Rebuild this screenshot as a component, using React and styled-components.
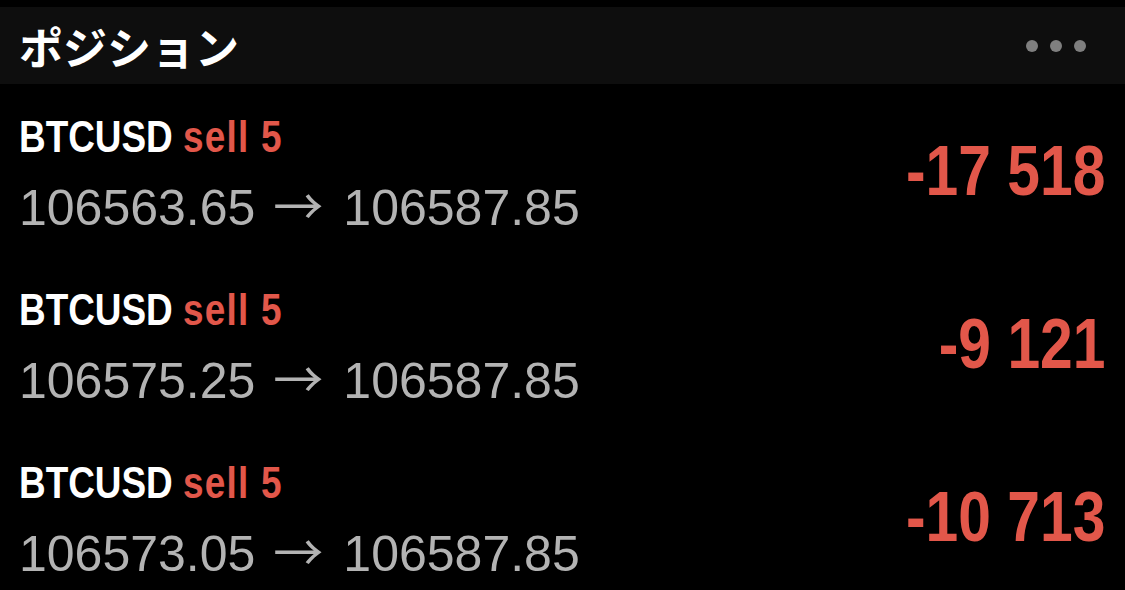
import React from "react";
import styled, { createGlobalStyle } from "styled-components";

const GlobalStyle = createGlobalStyle`
  body {
    margin: 0;
    background: #000;
  }
`

const Page = styled.div`
  width: 1125px;
  height: 590px;
  overflow: hidden;
  background: #000;
  padding-top: 7px;
  box-sizing: border-box;
`

const Header = styled.div`
  height: 77px;
  display: flex;
  align-items: center;
  justify-content: space-between;
  padding: 0 39px 0 19px;
  background: #0e0e0e;
`

const Title = styled.h2`
  margin: 0;
  color: #fff;
  font-family: "Noto Sans CJK JP", sans-serif;
  font-weight: 700;
  font-size: 44px;
  line-height: 1;
`

const Dots = styled.div`
  display: flex;
  gap: 12px;

  span {
    width: 12px;
    height: 12px;
    border-radius: 50%;
    background: #7f7f7f;
  }
`

const Row = styled.div`
  height: 173px;
  display: flex;
  align-items: center;
  justify-content: space-between;
  padding: 0 20px 0 19px;
  box-sizing: border-box;
`

const Info = styled.div`
  align-self: flex-start;
  display: flex;
  flex-direction: column;
  gap: 19px;
  margin-top: 29px;
`

// condensed look: no condensed face is installed, so narrow the bold face
const Symbol = styled.div`
  display: inline-block;
  color: #fff;
  font-family: "Liberation Sans", Arial, sans-serif;
  font-weight: 700;
  font-size: 45px;
  line-height: 48px;
  white-space: nowrap;
  transform: scaleX(0.82);
  transform-origin: left center;

  em {
    font-style: normal;
    color: #e2574a;
    letter-spacing: 1.5px;
  }
`

const Prices = styled.div`
  color: #b3b3b3;
  font-family: "Liberation Sans", Arial, sans-serif;
  font-size: 50px;
  line-height: 56px;
  white-space: nowrap;
`

const Arrow = styled.span`
  margin: 0 20px 0 18px;
  font-family: "Noto Sans CJK JP", sans-serif;
  font-size: 50px;
  font-weight: 400;
  line-height: 0;
`

const Pnl = styled.div`
  display: inline-block;
  color: #e2574a;
  font-family: "Liberation Sans", Arial, sans-serif;
  font-weight: 700;
  font-size: 70px;
  line-height: 80px;
  white-space: nowrap;
  transform: scaleX(0.84);
  transform-origin: right center;
`

const positions = [
  { open: "106563.65", pnl: "-17 518" },
  { open: "106575.25", pnl: "-9 121" },
  { open: "106573.05", pnl: "-10 713" },
]

const App = () => {
  return (
    <Page>
      <GlobalStyle />
      <Header>
        <Title>ポジション</Title>
        <Dots>
          <span />
          <span />
          <span />
        </Dots>
      </Header>
      {positions.map((p, i) => (
        <Row key={i}>
          <Info>
            <Symbol>
              BTCUSD <em>sell 5</em>
            </Symbol>
            <Prices>
              {p.open}<Arrow>→</Arrow>106587.85
            </Prices>
          </Info>
          <Pnl>{p.pnl}</Pnl>
        </Row>
      ))}
    </Page>
  )
}

export default App
